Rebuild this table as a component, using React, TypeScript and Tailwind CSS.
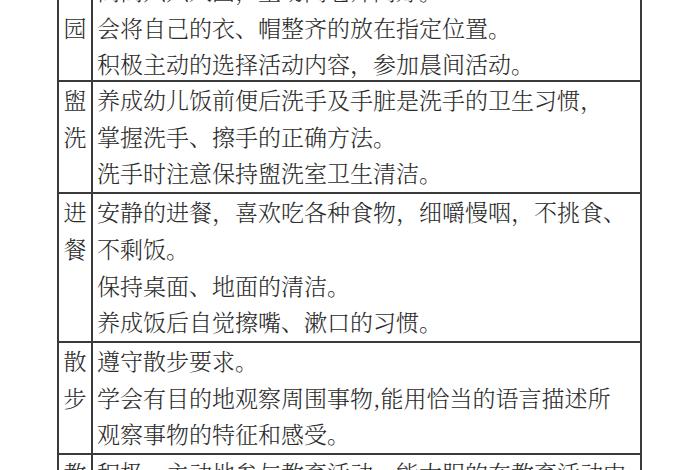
import React from "react";

type Row = { label: string[]; lines: string[] };

const rows: Row[] = [
  {
    label: ["", "园", ""],
    lines: [
      "高高兴兴入园，主动向老师问好。",
      "会将自己的衣、帽整齐的放在指定位置。",
      "积极主动的选择活动内容，参加晨间活动。",
    ],
  },
  {
    label: ["盥", "洗", ""],
    lines: [
      "养成幼儿饭前便后洗手及手脏是洗手的卫生习惯，",
      "掌握洗手、擦手的正确方法。",
      "洗手时注意保持盥洗室卫生清洁。",
    ],
  },
  {
    label: ["进", "餐", "", ""],
    lines: [
      "安静的进餐，喜欢吃各种食物，细嚼慢咽，不挑食、",
      "不剩饭。",
      "保持桌面、地面的清洁。",
      "养成饭后自觉擦嘴、漱口的习惯。",
    ],
  },
  {
    label: ["散", "步", ""],
    lines: [
      "遵守散步要求。",
      "学会有目的地观察周围事物,能用恰当的语言描述所",
      "观察事物的特征和感受。",
    ],
  },
  {
    label: ["教", "育"],
    lines: [
      "积极、主动地参与教育活动，能大胆的在教育活动中",
      "表达自己的想法。",
    ],
  },
];

export default function App() {
  return (
    <div className="w-[700px] h-[470px] overflow-hidden bg-white text-[#2b2b2b]">
      <div
        className="ml-[57px] -mt-[27px] w-[585px] border-x-2 border-[#3a3a3a] text-[23px] leading-[36.7px] font-light"
        style={{
          fontFamily:
            '"Noto Serif CJK SC", "Noto Sans CJK SC", "Liberation Serif", serif',
        }}
      >
        {rows.map((r, i) => (
          <div
            key={i}
            className={
              i === 0 ? "flex -mb-[3px]" : "flex border-t-2 border-[#3a3a3a]"
            }
          >
            <div className="w-[34px] shrink-0 border-r-2 border-[#3a3a3a] text-center">
              {r.label.map((c, j) => (
                <div key={j} className="h-[36.7px]">
                  {c}
                </div>
              ))}
            </div>
            <div className="flex-1 pl-[4px] whitespace-nowrap">
              {r.lines.map((l, j) => (
                <div key={j} className="h-[36.7px]">
                  {l}
                </div>
              ))}
            </div>
          </div>
        ))}
      </div>
    </div>
  );
}
